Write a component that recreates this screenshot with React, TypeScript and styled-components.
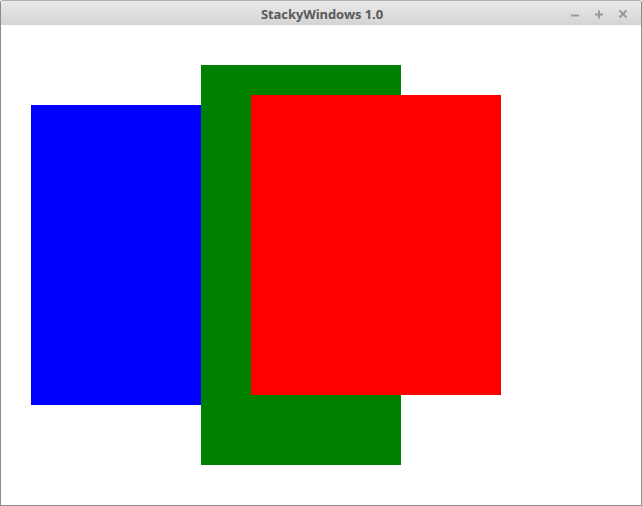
import React from "react";
import styled, { createGlobalStyle } from "styled-components";

const Global = createGlobalStyle`
  html, body { margin: 0; padding: 0; background: #fff; }
  #root { width: 642px; height: 506px; }
`;

const Frame = styled.div`
  width: 642px;
  height: 506px;
  box-sizing: border-box;
  display: flex;
  flex-direction: column;
  border: 1px solid #8c8c8c;
  border-top-color: #b0b0b0;
  border-radius: 3px 3px 0 0;
  overflow: hidden;
  background: #fff;
`;

const TitleBar = styled.div`
  height: 24px;
  flex: none;
  display: flex;
  align-items: center;
  justify-content: center;
  position: relative;
  background: linear-gradient(#e9e9e9, #d4d4d4);
  font-family: "Open Sans", "Noto Sans", sans-serif;
  font-weight: 700;
  font-size: 13px;
  color: #5a5a5a;
`;

const Title = styled.span`
  margin-top: 1px;
  margin-left: 2px;
  letter-spacing: -0.1px;
`;

const Controls = styled.div`
  position: absolute;
  right: 11px;
  top: 1px;
  height: 24px;
  display: flex;
  align-items: center;
  gap: 10px;
`;

const Ctl = styled.svg`
  width: 14px;
  height: 14px;
  display: block;
`;

const Canvas = styled.div`
  position: relative;
  flex: 1;
  background: #fff;
`;

const Rect = styled.div<{ $color: string }>`
  position: absolute;
  background: ${(p) => p.$color};
`;

const rects = [
  { color: "#0000ff", x: 30, y: 80, w: 200, h: 300 },
  { color: "#008000", x: 200, y: 40, w: 200, h: 400 },
  { color: "#ff0000", x: 250, y: 70, w: 250, h: 300 },
];

const stroke = { stroke: "#9a9a9a", strokeWidth: 2 };

export default function App() {
  return (
    <>
      <Global />
      <Frame>
        <TitleBar>
          <Title>StackyWindows 1.0</Title>
          <Controls>
            <Ctl viewBox="0 0 14 14">
              <path d="M3 8.5h8" {...stroke} />
            </Ctl>
            <Ctl viewBox="0 0 14 14">
              <path d="M3 7.5h8M7 3.5v8" {...stroke} />
            </Ctl>
            <Ctl viewBox="0 0 14 14">
              <path d="M3.5 3.5l7 7M10.5 3.5l-7 7" {...stroke} />
            </Ctl>
          </Controls>
        </TitleBar>
        <Canvas>
          {rects.map((r, i) => (
            <Rect
              key={i}
              $color={r.color}
              style={{ left: r.x, top: r.y, width: r.w, height: r.h }}
            />
          ))}
        </Canvas>
      </Frame>
    </>
  );
}
